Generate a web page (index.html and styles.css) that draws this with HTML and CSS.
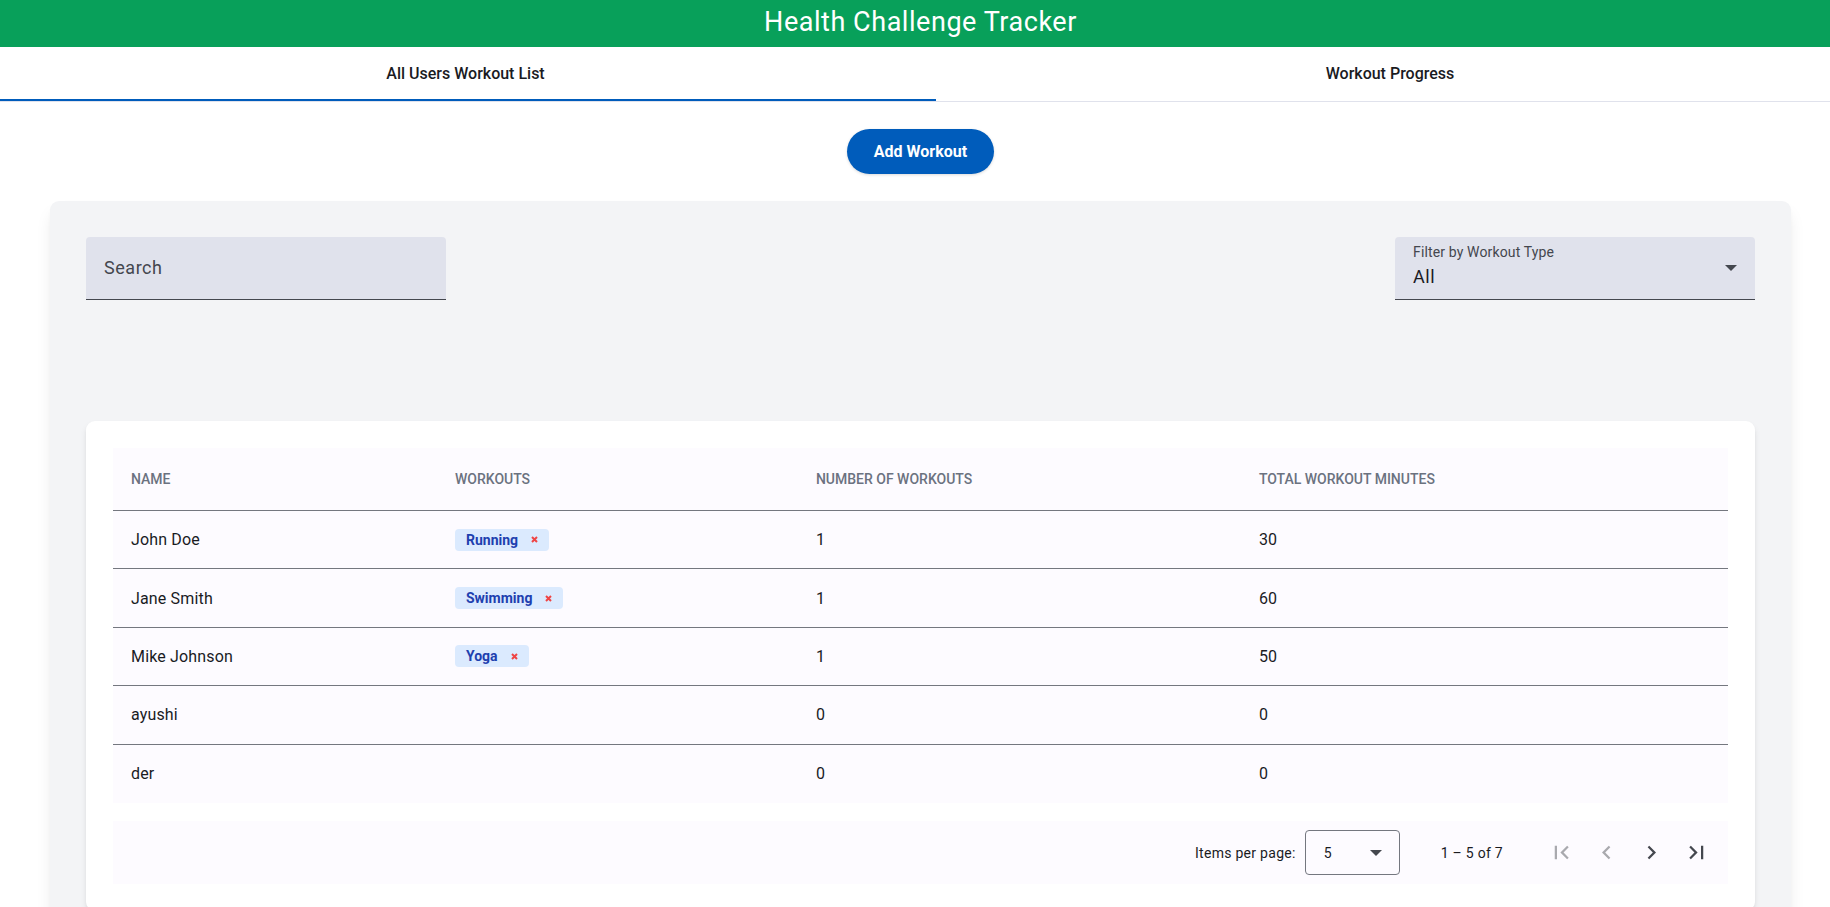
FILE: index.html
```html
<!DOCTYPE html>
<html lang="en">
<head>
<meta charset="utf-8">
<meta name="viewport" content="width=device-width, initial-scale=1">
<title>Health Challenge Tracker</title>
<link rel="stylesheet" href="styles.css">
</head>
<body>
<header class="app-header"><h1 class="app-title">Health Challenge Tracker</h1></header>

<nav class="tabs" role="tablist">
  <button class="tab tab-active" type="button" role="tab" aria-selected="true">All Users Workout List</button>
  <button class="tab" type="button" role="tab" aria-selected="false">Workout Progress</button>
</nav>

<main class="content">
  <div class="actions"><button class="add-button" type="button">Add Workout</button></div>

  <section class="panel">
    <div class="filters">
      <div class="field">
        <label class="field-label" for="search">Search</label>
        <input class="field-input" id="search" type="text">
      </div>
      <div class="field">
        <label class="field-label field-label-raised" for="type">Filter by Workout Type</label>
        <select class="field-input field-select" id="type">
          <option>All</option>
          <option>Running</option>
          <option>Swimming</option>
          <option>Yoga</option>
        </select>
        <svg class="field-arrow" viewBox="0 0 12 6" aria-hidden="true"><path d="M0 0h12L6 6z"/></svg>
      </div>
    </div>

    <div class="card">
      <table class="workouts">
        <colgroup><col class="col-name"><col class="col-workouts"><col class="col-count"><col class="col-minutes"></colgroup>
        <thead>
          <tr><th scope="col">NAME</th><th scope="col">WORKOUTS</th><th scope="col">NUMBER OF WORKOUTS</th><th scope="col">TOTAL WORKOUT MINUTES</th></tr>
        </thead>
        <tbody>
          <tr><td>John Doe</td><td><span class="chip">Running<button class="chip-remove" type="button" aria-label="Remove Running"><svg viewBox="0 0 7 7"><path d="M1 1l5 5M6 1L1 6"/></svg></button></span></td><td>1</td><td>30</td></tr>
          <tr><td>Jane Smith</td><td><span class="chip">Swimming<button class="chip-remove" type="button" aria-label="Remove Swimming"><svg viewBox="0 0 7 7"><path d="M1 1l5 5M6 1L1 6"/></svg></button></span></td><td>1</td><td>60</td></tr>
          <tr><td>Mike Johnson</td><td><span class="chip">Yoga<button class="chip-remove" type="button" aria-label="Remove Yoga"><svg viewBox="0 0 7 7"><path d="M1 1l5 5M6 1L1 6"/></svg></button></span></td><td>1</td><td>50</td></tr>
          <tr><td>ayushi</td><td></td><td>0</td><td>0</td></tr>
          <tr><td>der</td><td></td><td>0</td><td>0</td></tr>
        </tbody>
      </table>

      <div class="paginator">
        <label class="page-label" for="page-size">Items per page:</label>
        <div class="page-size">
          <select class="page-select" id="page-size"><option>5</option><option>10</option><option>20</option></select>
          <svg class="page-arrow" viewBox="0 0 12 6" aria-hidden="true"><path d="M0 0h12L6 6z"/></svg>
        </div>
        <span class="page-range">1 – 5 of 7</span>
        <div class="page-buttons">
          <button class="page-button" type="button" aria-label="First page" disabled><svg viewBox="0 0 24 24"><path d="M18.41 16.59L13.82 12l4.59-4.59L17 6l-6 6 6 6zM6 6h2v12H6z"/></svg></button>
          <button class="page-button" type="button" aria-label="Previous page" disabled><svg viewBox="0 0 24 24"><path d="M15.41 7.41L14 6l-6 6 6 6 1.41-1.41L10.83 12z"/></svg></button>
          <button class="page-button" type="button" aria-label="Next page"><svg viewBox="0 0 24 24"><path d="M10 6L8.59 7.41 13.17 12l-4.58 4.59L10 18l6-6z"/></svg></button>
          <button class="page-button" type="button" aria-label="Last page"><svg viewBox="0 0 24 24"><path d="M5.59 7.41L10.18 12l-4.59 4.59L7 18l6-6-6-6zM16 6h2v12h-2z"/></svg></button>
        </div>
      </div>
    </div>
  </section>
</main>
</body>
</html>
```
FILE: styles.css
```css
*, *::before, *::after { box-sizing: border-box; }

body {
  margin: 0;
  background: #fff;
  color: #1a1b1f;
  font-family: Roboto, sans-serif;
  font-size: 16px;
}

button, input, select { font: inherit; color: inherit; }
button { cursor: pointer; }

.app-header {
  padding: 4px 0 7px 11px;
  background: #08a05a;
  color: #fff;
  text-align: center;
}
.app-title {
  margin: 0;
  font-size: 27px;
  font-weight: 400;
  line-height: 36px;
  letter-spacing: 0.02em;
}

.tabs { display: flex; border-bottom: 1px solid #e0e2ec; }
.tab {
  flex: 1;
  padding: 0 0 2px 14px;
  height: 54px;
  border: 0;
  background: none;
  font-weight: 500;
}
.tab-active {
  flex: 0 0 51.15%;
  padding: 0 5px 0 0;
  border-bottom: 2px solid #005cbb;
}

.content { padding: 27px 39px 36px 50px; }
.actions { display: flex; justify-content: center; }
.add-button {
  padding: 0 27px;
  height: 45px;
  border: 0;
  border-radius: 24px;
  background: #005cbb;
  color: #fff;
  font-weight: 700;
  box-shadow: 0 1px 3px rgba(0, 0, 0, 0.15);
}

.panel {
  margin-top: 27px;
  padding: 36px;
  border-radius: 9px;
  background: #f3f4f6;
  box-shadow: 0 11px 17px -3px rgba(0, 0, 0, 0.1), 0 4px 7px -4px rgba(0, 0, 0, 0.1);
}
.filters { display: flex; justify-content: space-between; }

.field { position: relative; width: 360px; }
.field-input {
  display: block;
  width: 100%;
  height: 63px;
  padding: 24px 18px 6px;
  border: 0;
  border-bottom: 1px solid #44474e;
  border-radius: 4px 4px 0 0;
  background: #e0e2ec;
  font-size: 18px;
  letter-spacing: 0.03em;
  outline: 0;
}
.field-select { appearance: none; padding: 18px 18px 2px; }
.field-label {
  position: absolute;
  top: 18px;
  left: 18px;
  color: #44474e;
  font-size: 18px;
  line-height: 26px;
  letter-spacing: 0.03em;
  pointer-events: none;
}
.field-label-raised {
  top: 6px;
  font-size: 14px;
  line-height: 18px;
  letter-spacing: 0.01em;
}
.field-arrow {
  position: absolute;
  top: 28px;
  right: 18px;
  width: 12px;
  height: 6px;
  fill: #44474e;
  pointer-events: none;
}

.card {
  margin-top: 121px;
  padding: 27px;
  border-radius: 9px;
  background: #fff;
  box-shadow: 0 4px 7px -1px rgba(0, 0, 0, 0.1), 0 2px 4px -2px rgba(0, 0, 0, 0.1);
}

.workouts {
  width: 100%;
  height: 355px;
  border-collapse: separate;
  border-spacing: 0;
  table-layout: fixed;
  background: #fdfbff;
}
.col-name { width: 20.06%; }
.col-workouts { width: 22.35%; }
.col-count { width: 27.43%; }
.col-minutes { width: 30.16%; }
.workouts th, .workouts td {
  padding: 0 18px;
  border-bottom: 1px solid #74777f;
  text-align: left;
}
.workouts th {
  height: 63px;
  color: #6b7280;
  font-size: 14px;
  font-weight: 500;
}
.workouts td { height: 58px; letter-spacing: 0.01em; }
.workouts tbody tr:last-child td { border-bottom: 0; }

.chip {
  display: inline-flex;
  align-items: center;
  gap: 13px;
  height: 22px;
  padding: 0 11px;
  border-radius: 4px;
  background: #dbeafe;
  color: #1e40af;
  font-size: 14px;
  font-weight: 700;
  letter-spacing: 0;
  vertical-align: middle;
}
.chip-remove {
  display: flex;
  padding: 0;
  border: 0;
  background: none;
}
.chip-remove svg {
  width: 7px;
  height: 7px;
  fill: none;
  stroke: #ef4444;
  stroke-width: 2;
}

.paginator {
  display: flex;
  align-items: center;
  justify-content: flex-end;
  margin-top: 18px;
  padding: 0 9px;
  min-height: 63px;
  background: #fdfbff;
  font-size: 14px;
  letter-spacing: 0.02em;
}
.page-size { position: relative; width: 95px; margin-left: 9px; }
.page-select {
  display: block;
  appearance: none;
  width: 100%;
  height: 45px;
  padding: 0 18px;
  border: 1px solid #74777f;
  border-radius: 4px;
  background: none;
}
.page-arrow {
  position: absolute;
  top: 20px;
  right: 18px;
  width: 12px;
  height: 6px;
  fill: #44474e;
  pointer-events: none;
}
.page-range { margin: 0 36px 0 41px; }
.page-buttons { display: flex; }
.page-button {
  display: grid;
  place-items: center;
  width: 45px;
  height: 45px;
  padding: 0;
  border: 0;
  background: none;
}
.page-button svg { width: 27px; height: 27px; fill: #44474e; }
.page-button:disabled svg { fill: #a9a9ae; }
```
